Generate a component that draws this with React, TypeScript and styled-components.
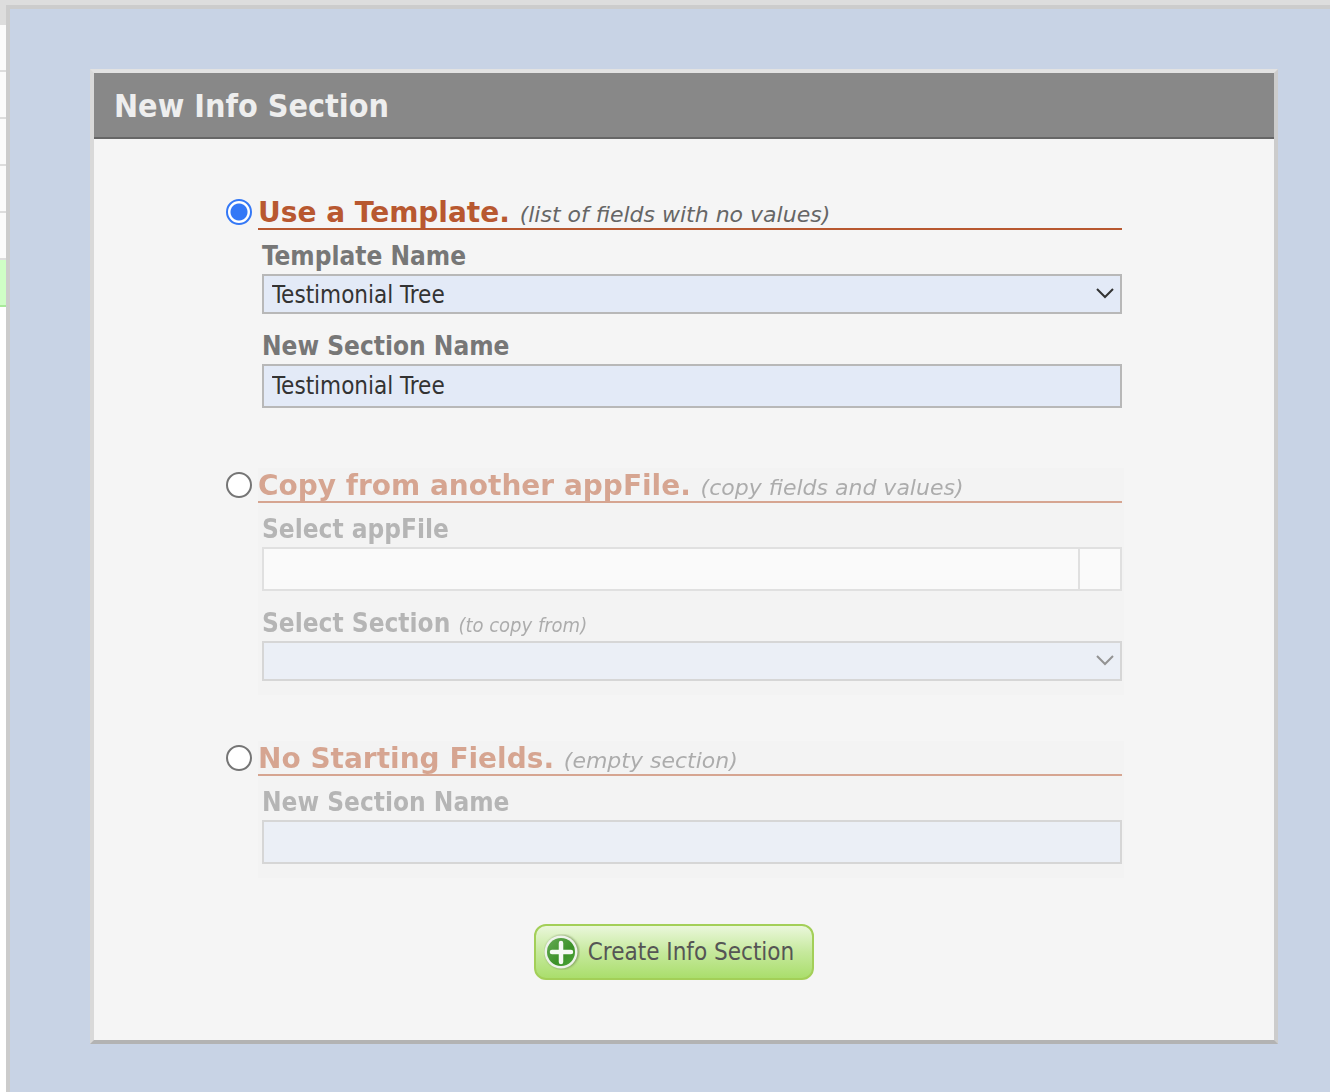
import React, { useId, useState } from "react";
import styled, { createGlobalStyle } from "styled-components";

const condensed = `"DejaVu Sans Condensed", Tahoma, "DejaVu Sans", sans-serif`;
const wide = `Verdana, "DejaVu Sans", sans-serif`;

const GlobalStyle = createGlobalStyle`
  *, *::before, *::after { box-sizing: border-box; }
  body { margin: 0; background: #fff; font-family: ${condensed}; font-variant-ligatures: none; }
`;

const Page = styled.div`
  display: flex;
  min-height: 100vh;
  background: linear-gradient(#ddd 25px, #fff 25px);
`;

const RowStrip = styled.div`
  flex: 0 0 6px;
  padding-top: 25px;
`;

const StripRow = styled.div<{ $active?: boolean }>`
  height: 47px;
  border-bottom: 2px solid ${(p) => (p.$active ? "#a9ea9b" : "#ddd")};
  background: ${(p) => (p.$active ? "#cffec6" : "#fbfbfb")};
`;

const Overlay = styled.main`
  flex: 1;
  margin-top: 5px;
  padding: 60px 52px 48px 80px;
  border: solid #ccc;
  border-width: 4px 0 0 4px;
  background: #c8d3e5;
`;

const Dialog = styled.section`
  border: 4px solid;
  border-color: #e2e2e2 #ccc #b3b3b3 #d9d9d9;
  background: #f5f5f5;
`;

const DialogTitle = styled.h1`
  margin: 0;
  padding: 2px 20px 0;
  border-bottom: 2px solid #666;
  background: #888;
  color: #eee;
  font-size: 32px;
  line-height: 62px;
`;

const Form = styled.form`
  display: flex;
  flex-direction: column;
  padding: 56px 150px 60px 130px;
`;

const Option = styled.div`
  display: flex;
  align-items: flex-start;
  gap: 6px;
  margin-bottom: 46px;
  padding-left: 2px;
`;

const Radio = styled.input`
  appearance: none;
  flex: none;
  width: 26px;
  height: 26px;
  margin: 4px 0 0;
  border: 2px solid #757575;
  border-radius: 50%;
  background: #fff;

  &:checked {
    border-color: #3478f6;
    background: radial-gradient(circle, #3478f6 8px, #fff 9px);
  }
`;

const OptionBody = styled.div<{ $dimmed: boolean }>`
  flex: 1;
  min-width: 0;
  padding: 0 2px 14px 0;
  background: ${(p) => (p.$dimmed ? "#f2f2f2" : "transparent")};
  opacity: ${(p) => (p.$dimmed ? 0.5 : 1)};
`;

const OptionHeading = styled.label`
  display: block;
  padding-top: 3px;
  border-bottom: 2px solid #b85830;
  color: #b85830;
  font: bold 28px/30px ${wide};
`;

const Hint = styled.em<{ $small?: boolean }>`
  color: #666;
  font-family: ${(p) => (p.$small ? condensed : wide)};
  font-size: ${(p) => (p.$small ? 20 : 22)}px;
  font-weight: normal;
  line-height: 1;
`;

const Fields = styled.div`
  display: flex;
  flex-direction: column;
  gap: 16px;
  padding: 10px 0 0 4px;
`;

const FieldLabel = styled.label`
  display: block;
  padding-bottom: 2px;
  color: #777;
  font-size: 26px;
  font-weight: bold;
  line-height: 32px;
`;

const TextBox = styled.input`
  display: block;
  width: 100%;
  height: 44px;
  padding: 0 8px;
  border: 2px solid #b8b8b8;
  border-radius: 0;
  background: #e3eaf7;
  color: #333;
  font: 24px ${condensed};
`;

const SelectWrap = styled.div`
  position: relative;
`;

const SelectBox = styled.select`
  appearance: none;
  display: block;
  width: 100%;
  height: 40px;
  padding: 2px 40px 0 8px;
  border: 2px solid #b8b8b8;
  border-radius: 0;
  background: #e3eaf7;
  color: #333;
  font: 24px ${condensed};
`;

const Chevron = styled.svg`
  position: absolute;
  top: 13px;
  right: 8px;
  pointer-events: none;
`;

const Combo = styled.div`
  display: flex;
  height: 44px;
  border: 2px solid #ccc;
  background: #fff;
`;

const ComboInput = styled.input`
  flex: 1;
  min-width: 0;
  padding: 0 8px;
  border: 0;
  background: transparent;
  font: 24px ${condensed};
`;

const ComboButton = styled.button`
  width: 42px;
  padding: 0;
  border: 0;
  border-left: 2px solid #ccc;
  background: transparent;
`;

const SubmitButton = styled.button`
  display: flex;
  align-items: center;
  align-self: center;
  gap: 8px;
  height: 56px;
  padding: 0 18px 0 8px;
  border: 2px solid #a3cf58;
  border-radius: 12px;
  background: linear-gradient(#eaf7db, #c6e99d 50%, #aade6c);
  color: #555;
  font: 24px ${condensed};
`;

function Select({ id, options }: { id: string; options: string[] }) {
  return (
    <SelectWrap>
      <SelectBox id={id}>
        {options.map((name) => (
          <option key={name}>{name}</option>
        ))}
      </SelectBox>
      <Chevron width="18" height="12" viewBox="0 0 18 12" fill="none" stroke="#333" strokeWidth="2" aria-hidden="true">
        <path d="M1 2l8 8 8-8" />
      </Chevron>
    </SelectWrap>
  );
}

function PlusIcon() {
  return (
    <svg width="36" height="36" viewBox="0 0 36 36" aria-hidden="true">
      <defs>
        <linearGradient id="disc" x1="0" y1="0" x2="1" y2="1">
          <stop offset="0" stopColor="#66ab56" />
          <stop offset="0.6" stopColor="#3c9128" />
          <stop offset="1" stopColor="#4da838" />
        </linearGradient>
        <filter id="shade" x="-20%" y="-20%" width="140%" height="140%">
          <feGaussianBlur stdDeviation="1" />
        </filter>
      </defs>
      <circle cx="18" cy="18" r="17" fill="#6c8550" opacity="0.7" filter="url(#shade)" />
      <circle cx="17" cy="18" r="16.5" fill="#eef3ea" />
      <circle cx="17" cy="18" r="14" fill="url(#disc)" />
      <path d="M17 9v19M8 18h19" stroke="#f6faf4" strokeWidth="4.5" strokeLinecap="round" />
    </svg>
  );
}

type Choice = "template" | "copy" | "empty";

function ChoiceSection(props: {
  value: Choice;
  current: Choice;
  onPick: (value: Choice) => void;
  title: string;
  hint: string;
  children: React.ReactNode;
}) {
  const id = useId();
  const active = props.value === props.current;
  return (
    <Option>
      <Radio type="radio" name="source" id={id} checked={active} onChange={() => props.onPick(props.value)} />
      <OptionBody $dimmed={!active}>
        <OptionHeading htmlFor={id}>
          {props.title} <Hint>{props.hint}</Hint>
        </OptionHeading>
        <Fields>{props.children}</Fields>
      </OptionBody>
    </Option>
  );
}

export default function App() {
  const [choice, setChoice] = useState<Choice>("template");
  const shared = { current: choice, onPick: setChoice };

  return (
    <>
      <GlobalStyle />
      <Page>
        <RowStrip>
          <StripRow />
          <StripRow />
          <StripRow />
          <StripRow />
          <StripRow />
          <StripRow $active />
        </RowStrip>
        <Overlay>
          <Dialog>
            <DialogTitle>New Info Section</DialogTitle>
            <Form onSubmit={(event) => event.preventDefault()}>
              <ChoiceSection {...shared} value="template" title="Use a Template." hint="(list of fields with no values)">
                <div>
                  <FieldLabel htmlFor="template-name">Template Name</FieldLabel>
                  <Select id="template-name" options={["Testimonial Tree"]} />
                </div>
                <div>
                  <FieldLabel htmlFor="template-section">New Section Name</FieldLabel>
                  <TextBox id="template-section" defaultValue="Testimonial Tree" />
                </div>
              </ChoiceSection>
              <ChoiceSection {...shared} value="copy" title="Copy from another appFile." hint="(copy fields and values)">
                <div>
                  <FieldLabel htmlFor="app-file">Select appFile</FieldLabel>
                  <Combo>
                    <ComboInput id="app-file" />
                    <ComboButton type="button" aria-label="Browse appFiles" />
                  </Combo>
                </div>
                <div>
                  <FieldLabel htmlFor="copy-section">
                    Select Section <Hint $small>(to copy from)</Hint>
                  </FieldLabel>
                  <Select id="copy-section" options={[]} />
                </div>
              </ChoiceSection>
              <ChoiceSection {...shared} value="empty" title="No Starting Fields." hint="(empty section)">
                <div>
                  <FieldLabel htmlFor="empty-section">New Section Name</FieldLabel>
                  <TextBox id="empty-section" />
                </div>
              </ChoiceSection>
              <SubmitButton type="submit">
                <PlusIcon />
                Create Info Section
              </SubmitButton>
            </Form>
          </Dialog>
        </Overlay>
      </Page>
    </>
  );
}
